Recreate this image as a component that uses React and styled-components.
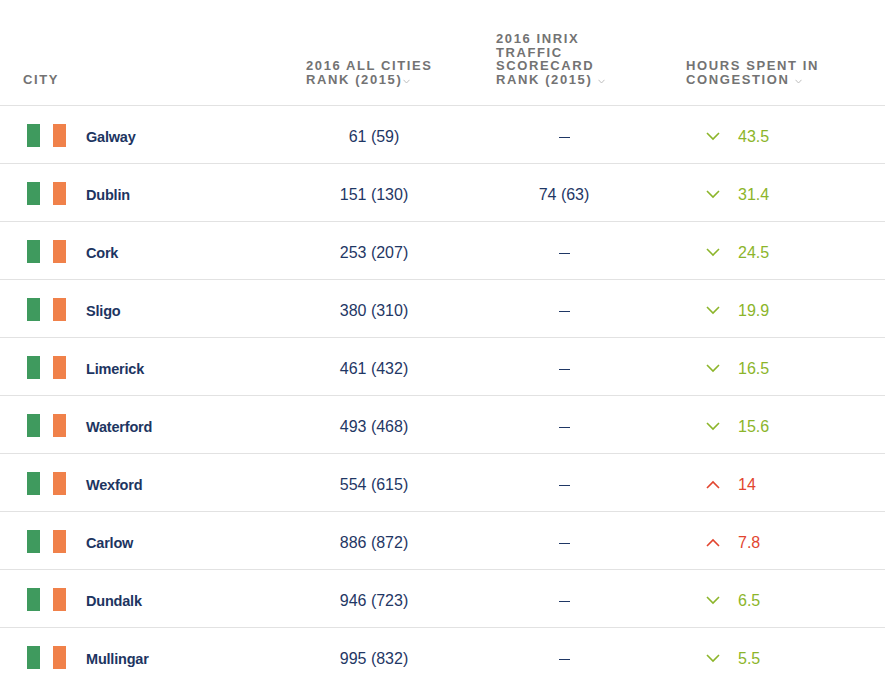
import styled, { createGlobalStyle } from "styled-components";

const GlobalStyle = createGlobalStyle`
  html, body {
    margin: 0;
    padding: 0;
    background: #ffffff;
  }
  body {
    font-family: "Liberation Sans", Arial, sans-serif;
  }
`;

const rows = [
  { city: "Galway", rank: "61 (59)", inrix: null, hours: "43.5", up: false },
  { city: "Dublin", rank: "151 (130)", inrix: "74 (63)", hours: "31.4", up: false },
  { city: "Cork", rank: "253 (207)", inrix: null, hours: "24.5", up: false },
  { city: "Sligo", rank: "380 (310)", inrix: null, hours: "19.9", up: false },
  { city: "Limerick", rank: "461 (432)", inrix: null, hours: "16.5", up: false },
  { city: "Waterford", rank: "493 (468)", inrix: null, hours: "15.6", up: false },
  { city: "Wexford", rank: "554 (615)", inrix: null, hours: "14", up: true },
  { city: "Carlow", rank: "886 (872)", inrix: null, hours: "7.8", up: true },
  { city: "Dundalk", rank: "946 (723)", inrix: null, hours: "6.5", up: false },
  { city: "Mullingar", rank: "995 (832)", inrix: null, hours: "5.5", up: false },
];

const Table = styled.div`
  width: 885px;
`;

const Row = styled.div`
  display: grid;
  grid-template-columns: 229px 136px 136px 136px;
  column-gap: 54px;
  padding-left: 23px;
  padding-top: 4px;
  border-bottom: 1px solid #e2e2e2;
  align-items: center;
  height: 53px;
`;

const HeaderRow = styled(Row)`
  height: 86px;
  padding-top: 0;
  padding-bottom: 19px;
  align-items: end;
`;

const HeadCell = styled.div`
  font-size: 13px;
  font-weight: 700;
  line-height: 13.5px;
  letter-spacing: 1.6px;
  text-transform: uppercase;
  color: #737373;
`;

const SortMark = styled.svg`
  width: 7px;
  height: 5px;
  margin-left: ${(p) => p.$gap || 1}px;
  vertical-align: 0px;
`;

const CityCell = styled.div`
  display: flex;
  align-items: center;
  gap: 20px;
  margin-left: 4px;
`;

const Flag = styled.div`
  display: flex;
  width: 39px;
  height: 23px;
  margin-top: -2px;
`;

const Stripe = styled.span`
  flex: 1;
  background: ${(p) => p.$color};
`;

const CityName = styled.span`
  font-size: 14.5px;
  font-weight: 700;
  color: #1d3561;
  letter-spacing: -0.2px;
`;

const NumCell = styled.div`
  text-align: center;
  font-size: 16px;
  color: #1f3765;
`;

const Dash = styled.span`
  display: inline-block;
  width: 11px;
  height: 1.3px;
  background: #1f3765;
  vertical-align: middle;
`;

const HoursCell = styled.div`
  display: flex;
  align-items: center;
  padding-left: 20px;
  gap: 18px;
  font-size: 16px;
  color: ${(p) => (p.$up ? "#e2452f" : "#8cb52a")};
`;

const Trend = styled.svg`
  width: 14px;
  height: 9px;
  overflow: visible;
  margin-top: -1px;
`;

const Chevron = ({ up }) => (
  <Trend viewBox="0 0 14 9">
    <path
      d={up ? "M1 8 L7 2 L13 8" : "M1 1 L7 7 L13 1"}
      fill="none"
      stroke="currentColor"
      strokeWidth="1.6"
    />
  </Trend>
);

const Sort = ({ gap }) => (
  <SortMark viewBox="0 0 7 5" $gap={gap}>
    <path d="M0.5 0.8 L3.5 4 L6.5 0.8" fill="none" stroke="#b8b8b8" strokeWidth="0.9" />
  </SortMark>
);

const App = () => {
  return (
    <>
      <GlobalStyle />
      <Table>
        <HeaderRow>
          <HeadCell>City</HeadCell>
          <HeadCell>
            2016 All Cities
            <br />
            Rank (2015)
            <Sort />
          </HeadCell>
          <HeadCell>
            2016 INRIX
            <br />
            Traffic
            <br />
            Scorecard
            <br />
            Rank (2015)
            <Sort gap={6} />
          </HeadCell>
          <HeadCell>
            Hours spent in
            <br />
            Congestion
            <Sort gap={6} />
          </HeadCell>
        </HeaderRow>
        {rows.map((r) => (
          <Row key={r.city}>
            <CityCell>
              <Flag>
                <Stripe $color="#3f9a5e" />
                <Stripe $color="#ffffff" />
                <Stripe $color="#f0814a" />
              </Flag>
              <CityName>{r.city}</CityName>
            </CityCell>
            <NumCell>{r.rank}</NumCell>
            <NumCell>{r.inrix ? r.inrix : <Dash />}</NumCell>
            <HoursCell $up={r.up}>
              <Chevron up={r.up} />
              <span>{r.hours}</span>
            </HoursCell>
          </Row>
        ))}
      </Table>
    </>
  );
};

export default App;
